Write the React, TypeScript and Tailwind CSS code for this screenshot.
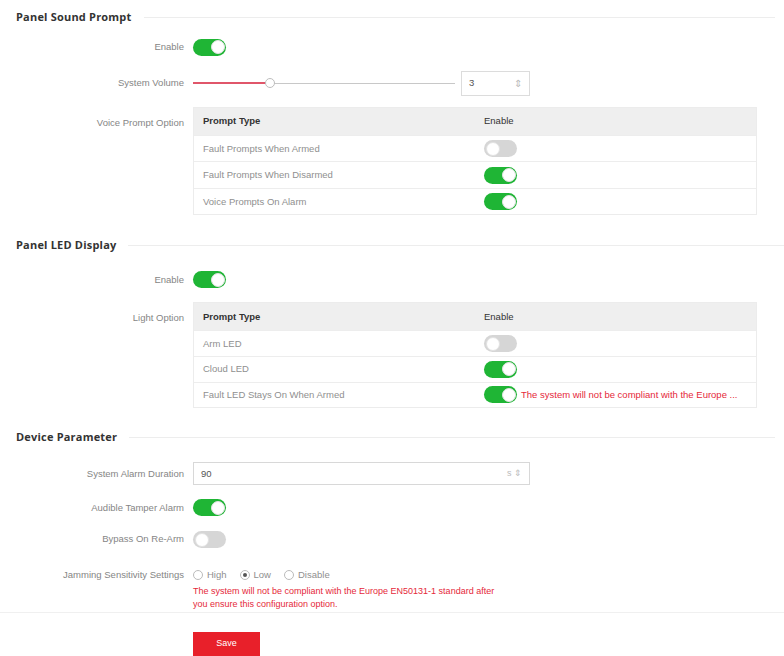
import React from "react"

const Toggle = ({ on }: { on: boolean }) => (
    <div
        className={`w-[33px] h-[17px] rounded-full relative shrink-0 ${on ? "bg-[#1fb535]" : "bg-[#d6d6d6]"}`}
    >
        <div
            className={`absolute top-[1.5px] w-[14px] h-[14px] rounded-full bg-white border border-[#e2e2e2] ${on ? "right-[1.5px]" : "left-[1.5px]"}`}
        />
    </div>
)

const SectionTitle = ({ title, lineEnd }: { title: string; lineEnd: string }) => (
    <div className={`flex items-center h-[20px] pl-4 ${lineEnd}`}>
        <h2 className="font-bold text-[11px] text-[#333] font-['Open_Sans',sans-serif] tracking-[0.2px]">{title}</h2>
        <div className="flex-1 h-px bg-[#ededed] ml-3" />
    </div>
)

const Row = ({ label, children, className = "" }: { label: string; children: React.ReactNode; className?: string }) => (
    <div className={`flex items-center ${className}`}>
        <div className="w-[193px] shrink-0 text-right pr-[9px] text-[9.5px] text-[#858585]">{label}</div>
        {children}
    </div>
)

type Item = { name: string; on: boolean; note?: string }

const PromptTable = ({ items, rowH }: { items: Item[]; rowH: string }) => (
    <div className="w-[564px] border border-[#ececec]">
        <div className="flex items-center h-[27px] bg-[#efefef] text-[9.5px] text-[#333]">
            <div className="w-[290px] pl-[9px] font-bold">Prompt Type</div>
            <div>Enable</div>
        </div>
        {items.map((item, i) => (
            <div key={i} className={`flex items-center ${rowH} border-t border-[#ededed] text-[9.5px]`}>
                <div className="w-[290px] pl-[9px] text-[#8f8f8f]">{item.name}</div>
                <Toggle on={item.on} />
                {item.note && <span className="ml-[4px] text-[#e5283a] whitespace-nowrap">{item.note}</span>}
            </div>
        ))}
    </div>
)

const Radio = ({ label, checked }: { label: string; checked?: boolean }) => (
    <label className="flex items-center gap-[4px] text-[9.5px] text-[#8f8f8f]">
        <span className="w-[10px] h-[10px] rounded-full border border-[#bbb] flex items-center justify-center">
            {checked && <span className="w-[4px] h-[4px] rounded-full bg-[#555]" />}
        </span>
        {label}
    </label>
)

export default function App() {
    return (
        <div className="w-[784px] h-[656px] bg-white overflow-hidden font-['Liberation_Sans',Arial,sans-serif] flex flex-col">
            <div className="mt-[7px]">
                <SectionTitle title="Panel Sound Prompt" lineEnd="pr-[9px]" />
            </div>
            <Row label="Enable" className="h-[24px] mt-[9px]">
                <Toggle on />
            </Row>
            <Row label="System Volume" className="h-[25px] mt-[12px]">
                <div className="w-[262px] h-[10px] relative flex items-center">
                    <div className="w-[75px] h-[2px] bg-[#e0566a]" />
                    <div className="flex-1 h-px bg-[#c8c8c8]" />
                    <div className="absolute left-[72px] top-0 w-[10px] h-[10px] rounded-full bg-white border border-[#bdbdbd]" />
                </div>
                <div className="ml-[6px] w-[69px] h-[25px] border border-[#dcdcdc] flex items-center justify-between px-[7px] text-[9.5px] text-[#555]">
                    <span>3</span>
                    <span className="text-[#bbb] text-[10px]">⇕</span>
                </div>
            </Row>
            <div className="flex items-start mt-[11px]">
                <div className="w-[193px] shrink-0 text-right pr-[9px] text-[9.5px] text-[#858585] pt-[9px]">Voice Prompt Option</div>
                <PromptTable
                    rowH="h-[26.5px]"
                    items={[
                        { name: "Fault Prompts When Armed", on: false },
                        { name: "Fault Prompts When Disarmed", on: true },
                        { name: "Voice Prompts On Alarm", on: true },
                    ]}
                />
            </div>

            <div className="mt-[20px]">
                <SectionTitle title="Panel LED Display" lineEnd="pr-0" />
            </div>
            <Row label="Enable" className="h-[24px] mt-[13px]">
                <Toggle on />
            </Row>
            <div className="flex items-start mt-[11px]">
                <div className="w-[193px] shrink-0 text-right pr-[9px] text-[9.5px] text-[#858585] pt-[9px]">Light Option</div>
                <PromptTable
                    rowH="h-[25.6px]"
                    items={[
                        { name: "Arm LED", on: false },
                        { name: "Cloud LED", on: true },
                        { name: "Fault LED Stays On When Armed", on: true, note: "The system will not be compliant with the Europe ..." },
                    ]}
                />
            </div>

            <div className="mt-[19px]">
                <SectionTitle title="Device Parameter" lineEnd="pr-[9px]" />
            </div>
            <Row label="System Alarm Duration" className="h-[23px] mt-[15px]">
                <div className="w-[337px] h-[23px] border border-[#d8d8d8] flex items-center justify-between px-[7px] text-[9.5px] text-[#555]">
                    <span>90</span>
                    <span className="text-[#bbb] text-[9px]">s ⇕</span>
                </div>
            </Row>
            <Row label="Audible Tamper Alarm" className="h-[24px] mt-[11px]">
                <Toggle on />
            </Row>
            <Row label="Bypass On Re-Arm" className="h-[24px] mt-[9px]">
                <Toggle on={false} />
            </Row>
            <Row label="Jamming Sensitivity Settings" className="h-[16px] mt-[16px]">
                <div className="flex items-center gap-[13px]">
                    <Radio label="High" />
                    <Radio label="Low" checked />
                    <Radio label="Disable" />
                </div>
            </Row>
            <div className="pl-[193px] mt-[3px] text-[9px] leading-[13px] text-[#e5283a]">
                The system will not be compliant with the Europe EN50131-1 standard after
                <br />
                you ensure this configuration option.
            </div>
            <div className="h-px bg-[#f0f0f0] mt-[1px]" />
            <div className="pl-[193px] mt-[16px]">
                <button className="w-[67px] h-[24px] bg-[#e8202a] text-white text-[9px]">Save</button>
            </div>
        </div>
    )
}
